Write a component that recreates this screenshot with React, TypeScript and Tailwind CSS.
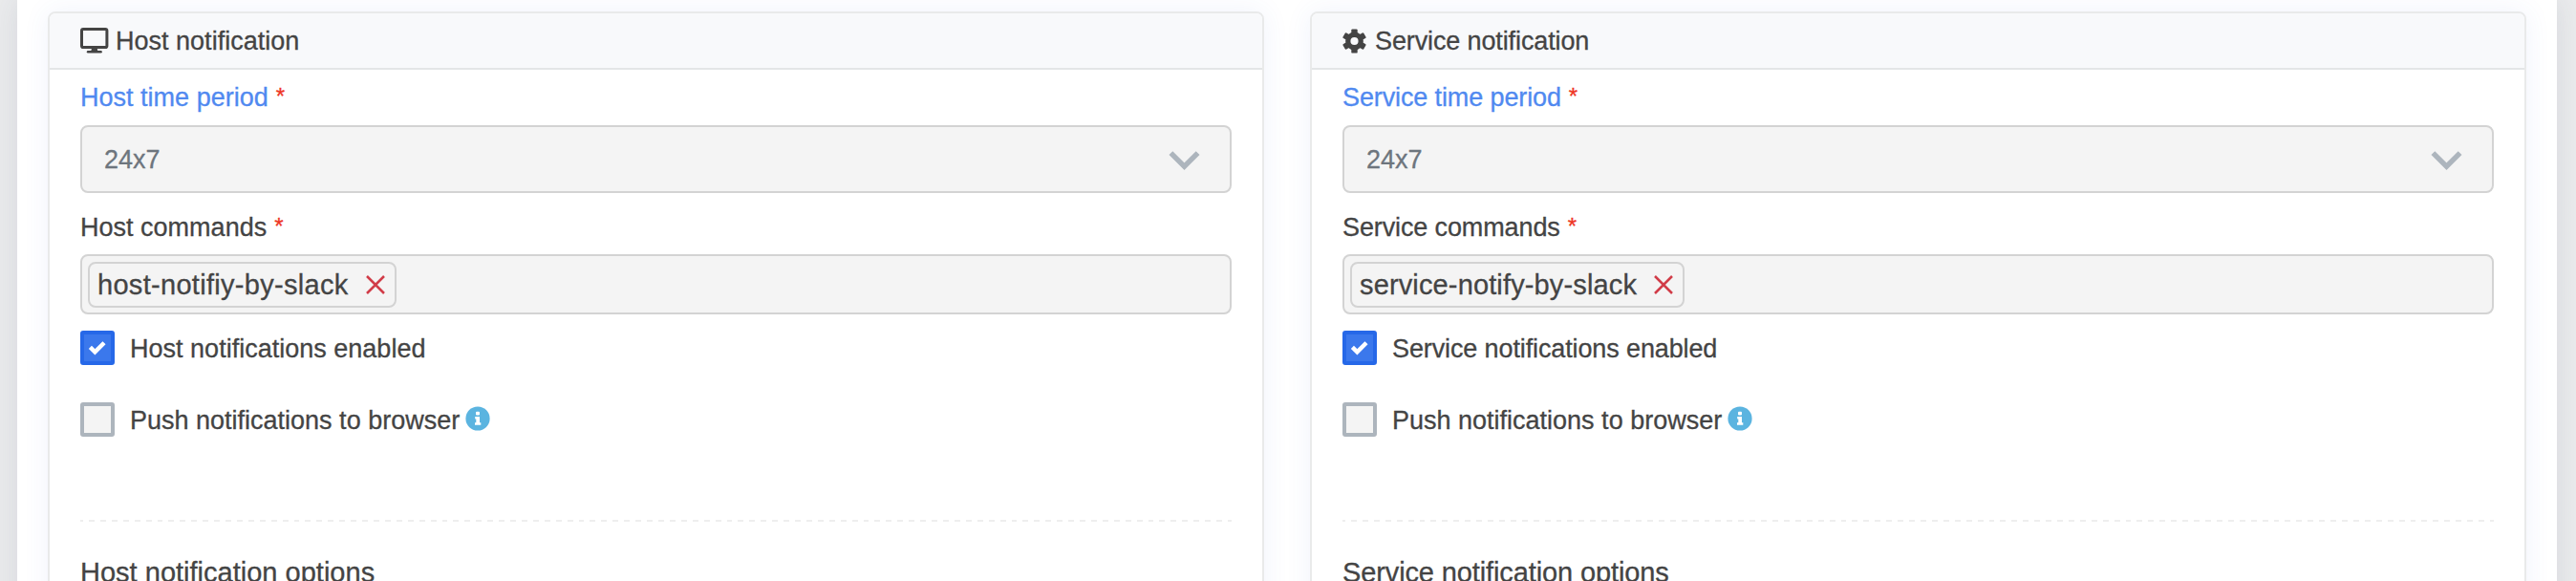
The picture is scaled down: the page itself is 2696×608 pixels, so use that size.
import React from "react";

function MonitorIcon() {
  return (
    <svg width="30" height="28" viewBox="0 0 30 28" fill="none" className="block">
      <rect x="1.5" y="1.5" width="26.4" height="19" rx="1.6" stroke="#444" strokeWidth="3" />
      <path d="M12 21h5.6l.8 4h-7.2z" fill="#444" />
      <path d="M8 25.3h13.600" stroke="#444" strokeWidth="2.4" strokeLinecap="round" />
    </svg>
  );
}

function GearIcon() {
  return (
    <svg width="25" height="26" viewBox="-12.5 -13 25 26" className="block">
      <g fill="#444">
        <circle r="9.4" />
        <rect x="-3.2" y="-12.6" width="6.4" height="25.2" rx="1.2" />
        <rect x="-3.2" y="-12.6" width="6.4" height="25.2" rx="1.2" transform="rotate(60)" />
        <rect x="-3.2" y="-12.6" width="6.4" height="25.2" rx="1.2" transform="rotate(-60)" />
      </g>
      <circle r="4.1" fill="#f8f9fb" />
    </svg>
  );
}

function InfoIcon() {
  return (
    <svg width="26" height="26" viewBox="0 0 26 26" className="-mt-[2px] block">
      <circle cx="13" cy="13" r="12.6" fill="#5bb4e0" />
      <rect x="11" y="5.8" width="4" height="3.8" rx="1" fill="#fff" />
      <path d="M10.2 11.1h4.8v6.1h1.3v2.5h-6.3v-2.5h1.3v-3.6h-1.1z" fill="#fff" />
    </svg>
  );
}

function Required() {
  return <span className="ml-[8px] text-[24px] leading-[27px] tracking-normal text-[#ee3524]">*</span>;
}

function Checkbox({ checked }: { checked?: boolean }) {
  return checked ? (
    <span className="flex h-9 w-9 items-center justify-center rounded-[3px] border-4 border-[#2668e8] bg-[#3b78ec]">
      <svg width="20" height="16" viewBox="0 0 20 16" className="-mt-px block">
        <path d="M2.4 7.4l5 5L17 2.8" stroke="#fff" strokeWidth="4.4" fill="none" />
      </svg>
    </span>
  ) : (
    <span className="h-9 w-9 rounded-[3px] border-4 border-[#adb5bd] bg-[#f4f4f4]" />
  );
}

interface CardProps {
  icon: React.ReactNode;
  title: string;
  kind: string;
  command: string;
  labelTracking: string;
  tagTracking: string;
}

function NotificationCard({ icon, title, kind, command, labelTracking, tagTracking }: CardProps) {
  return (
    <section className="h-[700px] w-[1273px] shrink-0 rounded-[8px] border-2 border-[#e9eaea] bg-white shadow-[0_0_28px_rgba(60,100,220,0.08)]">
      <header className="flex h-[59px] items-center rounded-t-[6px] border-b-2 border-[#e4e6e7] bg-[#f8f9fb] px-8">
        {icon}
        <h2 className={labelTracking}>{title}</h2>
      </header>
      <div className="flex flex-col px-8 pt-[14px]">
        <label className={`flex h-[30px] text-[#5089f0] ${labelTracking}`}>
          {kind} time period
          <Required />
        </label>
        <div className="mt-[14px] flex h-[71px] items-center justify-between rounded-[8px] border-2 border-[#d3d3d3] bg-[#f4f4f4] pr-[31px] pl-[23px] text-[#6d757d]">
          <span>24x7</span>
          <svg width="33" height="22" viewBox="0 0 33 22" className="mt-[2px] block">
            <path d="M2.4 3.1l14.1 14 14.1-14" stroke="#adb5bd" strokeWidth="5.4" fill="none" />
          </svg>
        </div>
        <label className={`mt-[21px] flex h-[30px] ${labelTracking}`}>
          {kind} commands
          <Required />
        </label>
        <div className="mt-[13px] flex h-[63px] rounded-[8px] border-2 border-[#d3d3d3] bg-[#f4f4f4] p-[6px]">
          <span className={`flex h-[48px] items-center rounded-[8px] border-2 border-[#d3d3d3] pr-[10px] pl-[8px] text-[29px] ${tagTracking}`}>
            {command}
            <svg width="20" height="20" viewBox="0 0 20 20" className="ml-[18px] block">
              <path d="M1 1l18 18M19 1L1 19" stroke="#d13c48" strokeWidth="2.5" />
            </svg>
          </span>
        </div>
        <label className={`mt-[17px] flex h-9 items-center gap-[16px] ${labelTracking}`}>
          <Checkbox checked />
          <span className="pt-px">{kind} notifications enabled</span>
        </label>
        <label className="mt-[39px] flex h-9 items-center">
          <Checkbox />
          <span className="mr-[6px] ml-[16px] pt-px tracking-normal">Push notifications to browser</span>
          <InfoIcon />
        </label>
        <div className="mt-[87px] h-[2px] bg-[repeating-linear-gradient(90deg,#eeeeee_0_3px,transparent_3px_9px,#eeeeee_9px_11.92px)]" />
        <h3 className={`mt-[37px] text-[29px] leading-[32px] ${labelTracking}`}>{kind} notification options</h3>
      </div>
    </section>
  );
}

export default function App() {
  return (
    <div className="h-[608px] w-[2696px] overflow-hidden bg-[#eaebec] pl-[18px] font-['Liberation_Sans',Arial,sans-serif] text-[27px] leading-[30px] text-[#444] [-webkit-text-stroke:0.3px_currentColor]">
      <main className="flex h-[800px] w-[2658px] gap-[48px] bg-white px-8 pt-3 shadow-[0_0_28px_rgba(50,60,110,0.1)]">
        <NotificationCard
          icon={<span className="mr-[7px]"><MonitorIcon /></span>}
          title="Host notification"
          kind="Host"
          command="host-notifiy-by-slack"
          labelTracking="tracking-[0.01px]"
          tagTracking="tracking-[0.3px]"
        />
        <NotificationCard
          icon={<span className="mr-[9px]"><GearIcon /></span>}
          title="Service notification"
          kind="Service"
          command="service-notify-by-slack"
          labelTracking="tracking-[-0.12px]"
          tagTracking="tracking-[0.14px]"
        />
      </main>
    </div>
  );
}
